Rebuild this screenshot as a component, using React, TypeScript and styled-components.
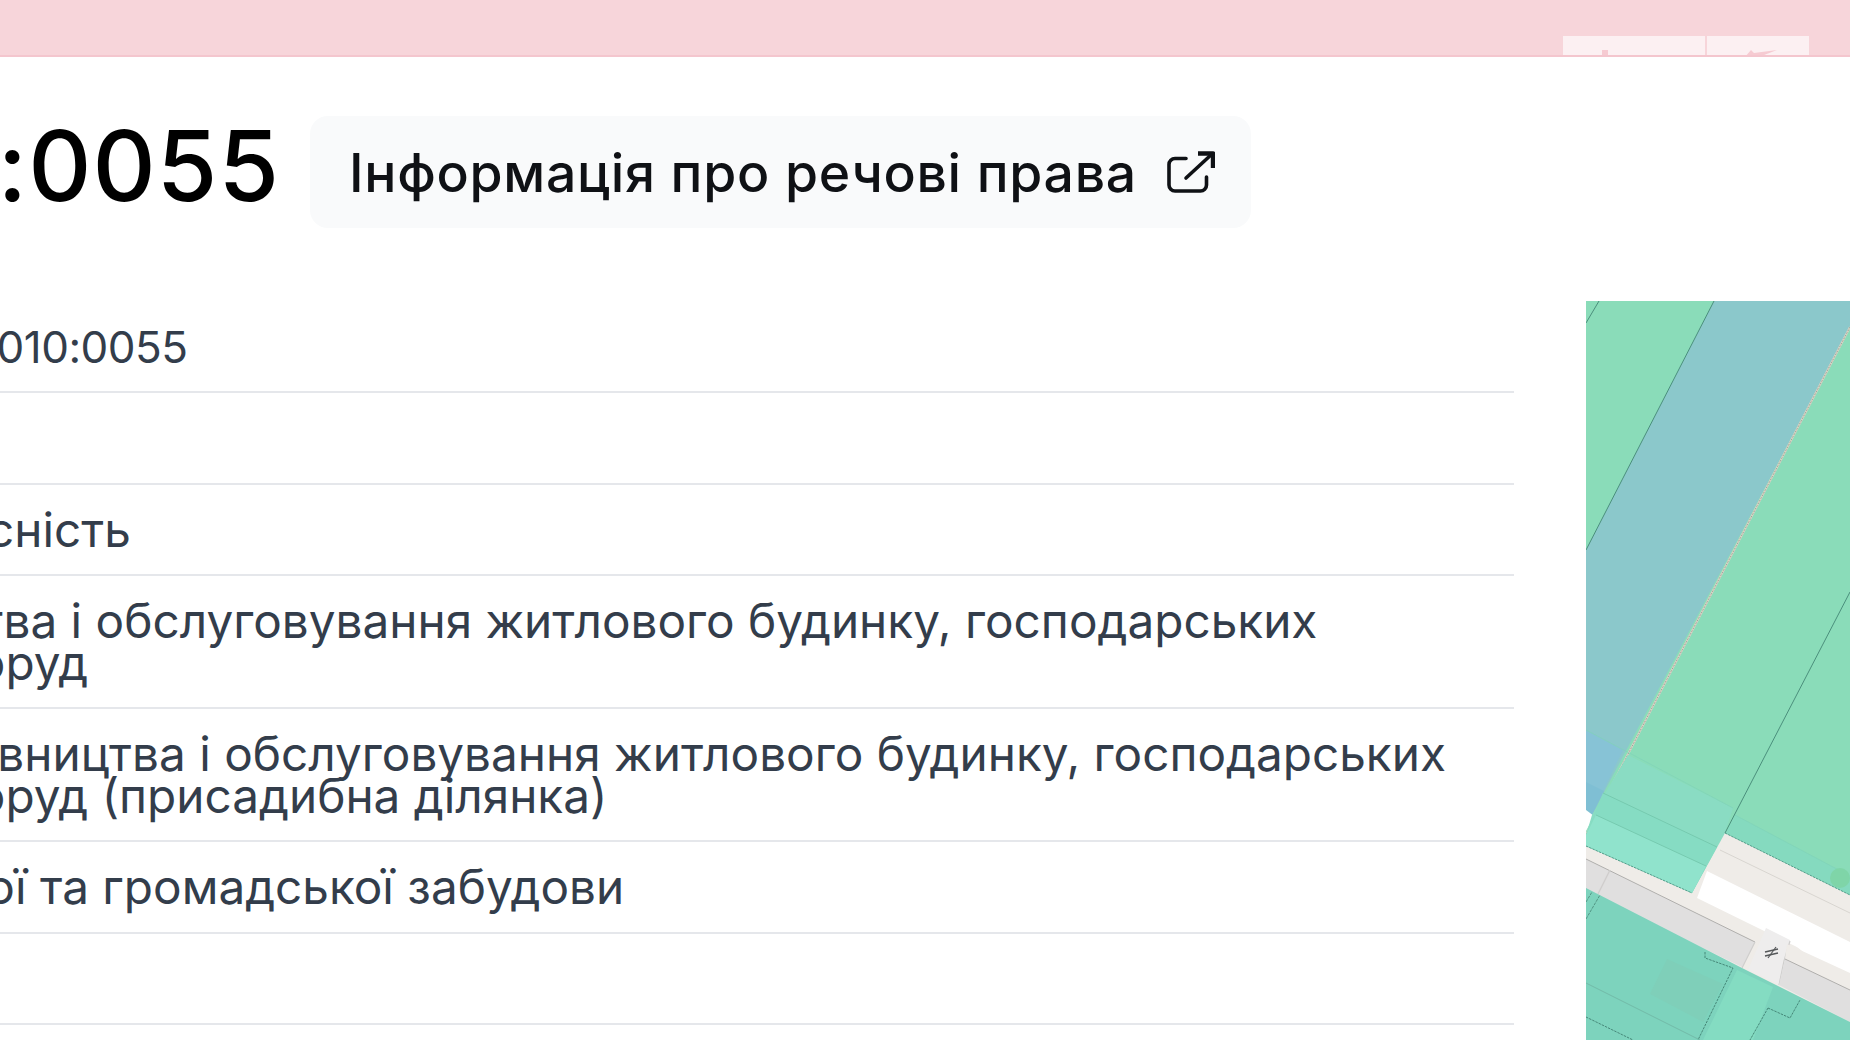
import React from 'react';
import styled, { createGlobalStyle } from 'styled-components';

const GlobalStyle = createGlobalStyle`
  html, body {
    margin: 0;
    height: 100%;
    overflow: hidden;
    background: #fff;
    font-family: Inter, "Liberation Sans", sans-serif;
  }
`;

const Screen = styled.div`
  width: 1850px;
  height: 1040px;
  overflow: hidden;
`;

const TopBar = styled.div`
  height: 57px;
  box-sizing: border-box;
  overflow: hidden;
  background: #f7d5da;
  border-bottom: 2px solid #f4c6ce;
  display: flex;
  justify-content: flex-end;
  align-items: flex-start;
  gap: 2px;
  padding: 36px 41px 0 0;
`;

const TopTab = styled.div<{ $width: number }>`
  width: ${(p) => p.$width}px;
  height: 21px;
  background: #fcf0f2;
  overflow: hidden;
  flex: none;
`;

const Page = styled.div`
  margin-left: -850px;
  width: 2700px;
`;

const Header = styled.header`
  display: flex;
  align-items: center;
  gap: 30px;
  margin-top: 59px;
  height: 112px;
`;

const TitleSlot = styled.div`
  width: 1130px;
  display: flex;
  justify-content: flex-end;
  flex: none;
`;

const Title = styled.h1`
  margin: 0;
  font-size: 98px;
  font-weight: 500;
  line-height: 100px;
  height: 112px;
  letter-spacing: 1px;
  color: #000;
  white-space: nowrap;
`;

const RightsButton = styled.a`
  display: flex;
  align-items: center;
  justify-content: space-between;
  width: 941px;
  height: 112px;
  box-sizing: border-box;
  padding: 0 36px 0 39px;
  background: #f9fafb;
  border-radius: 18px;
  color: #0f1115;
  font-size: 53.5px;
  font-weight: 500;
  letter-spacing: 0.7px;
  white-space: nowrap;
`;

const Body = styled.div`
  display: flex;
  align-items: flex-start;
  gap: 72px;
  margin-top: 73px;
`;

const Table = styled.div`
  width: 2364px;
  flex: none;
`;

const Row = styled.div`
  display: grid;
  grid-template-columns: 518px 1fr;
  padding: 24px 0 23.3px;
  border-bottom: 2px solid #e5e7eb;
  min-height: 42px;
  font-size: 47.7px;
  line-height: 42px;
  color: #333d4b;
`;

const Label = styled.div`
  font-weight: 500;
  white-space: nowrap;
`;

const Value = styled.div`
  white-space: nowrap;
`;

const NumberValue = styled(Value)`
  font-size: 44px;
  letter-spacing: -0.5px;
  padding-top: 1px;
`;

const CodedLine = styled.div`
  margin-left: -6px;
`;

const ContinuedLine = styled.div`
  padding-left: 12px;
`;

const MapPanel = styled.svg`
  display: block;
  flex: none;
  width: 264px;
  height: 739px;
`;

const LinkIcon = () => (
  <svg width={48} height={42} viewBox="0 0 48 42" fill="none" stroke="currentColor" strokeWidth={3.6} strokeLinecap="round" strokeLinejoin="round">
    <path d="M19 7.5H8a6 6 0 0 0-6 6V34a6 6 0 0 0 6 6h25.5a6 6 0 0 0 6-6V26" />
    <path d="M19 27L45 3" />
    <path d="M31 2.5H46V17" strokeWidth={4.4} strokeLinecap="butt" />
  </svg>
);

const ParcelMap = () => (
  <MapPanel viewBox="0 0 264 739" preserveAspectRatio="none">
    <defs>
      <filter id="soft" x="0" y="0" width="100%" height="100%">
        <feGaussianBlur stdDeviation="0.45" />
      </filter>
    </defs>
    <g filter="url(#soft)">
      <rect width="264" height="739" fill="#8adcb9" />
      {/* blue parcel */}
      <path d="M128 0H264V26L6 514L0 509V249Z" fill="#8bc8cb" />
      <path d="M0 429L37 449L6 514L0 509Z" fill="#87c3d6" />
      <path d="M0 481L18 490L6 514L0 509Z" fill="#7fbfd4" />
      <path d="M0 509L8 515L0 530Z" fill="#fff" />
      <path d="M13 0L0 22M128 0L0 249" stroke="#4b8f7c" strokeWidth="1" fill="none" />
      <path d="M264 26L0 534" stroke="#d9d2c4" strokeWidth="2" fill="none" />
      <path d="M264 26L0 534" stroke="#8a9a90" strokeWidth="0.8" strokeDasharray="1.5 1.5" fill="none" />

      {/* street */}
      <path d="M139 532L264 594V790H0V545Z" fill="#efece8" />
      <path d="M121 570L264 641V672L111 597Z" fill="#fff" />
      <path d="M111 597L179 628L204 640L264 669V690L204 640L179 628Z" fill="#fff" />
      <path d="M134 549L264 612" stroke="#d8d5d0" strokeWidth="1" fill="none" />
      <path d="M0 558L169 641L156 666L0 590Z" fill="#e0dfdf" />
      <path d="M0 558L169 641" stroke="#a9a8a6" strokeWidth="0.9" fill="none" />
      <path d="M24 569L12 593" stroke="#cfcecd" strokeWidth="1.4" fill="none" />
      <path d="M180 627L204 639L194 684L162 669Z" fill="#eeeded" />
      <path d="M169 641L156 667M204 640L198 660L193 684" stroke="#cfcecd" strokeWidth="1.2" fill="none" />
      <path d="M201 643L264 672V689L199 658Z" fill="#efece8" />
      <path d="M199 658L264 689V721L193 684Z" fill="#e0dfdf" />
      <path d="M199 658L264 689" stroke="#a9a8a6" strokeWidth="0.9" fill="none" />

      {/* lower parcels */}
      <path d="M0 587L156 667L264 721V739H0Z" fill="#7dd3bd" />
      <path d="M151 669L187 686L167 739H117Z" fill="#84dcc2" />
      <path d="M81 658L137 683L117 721L64 693Z" fill="#7fcfb9" />
      <path d="M0 601L6 591M0 618L14 594" stroke="#4d8f7e" strokeWidth="0.9" strokeDasharray="3 1" fill="none" />
      <path d="M119 651V657L147 667L112 739" stroke="#3f7f70" strokeWidth="0.9" strokeDasharray="2.5 1" fill="none" />
      <path d="M182 707L204 717L214 699M182 707L164 739" stroke="#3f7f70" strokeWidth="0.9" strokeDasharray="2.5 1" fill="none" />
      <path d="M0 716L47 739" stroke="#3f7f70" strokeWidth="0.9" strokeDasharray="2.5 1" fill="none" />
      <path d="M0 682L114 739" stroke="#6fb7a6" strokeWidth="0.9" fill="none" />

      {/* front of the green parcels */}
      <path d="M42 454L147 507L139 532L106 592L0 545V534L6 514Z" fill="#8adcc3" />
      <path d="M17 492L131 546L106 592L0 545V534Z" fill="#86dcc3" />
      <path d="M10 514L120 565L106 592L0 545V534Z" fill="#90e3cc" />
      <path d="M17 492L131 546M10 514L120 565" stroke="#74c7ad" strokeWidth="0.9" fill="none" />
      <path d="M0 545L106 592" stroke="#4f9583" strokeWidth="0.9" strokeDasharray="2.5 1" fill="none" />
      <path d="M149 514L264 575V594L139 532Z" fill="#85dabf" />
      <path d="M139 532L264 594" stroke="#4f9583" strokeWidth="0.9" strokeDasharray="2.5 1" fill="none" />
      <path d="M0 429L147 507M149 514L264 575" stroke="#7fd2b9" strokeWidth="0.7" fill="none" />
      <circle cx="254" cy="577" r="10" fill="#7fd5a8" />
      <path d="M264 291L139 532" stroke="#4b8f7c" strokeWidth="1" fill="none" />

      {/* crossing sign */}
      <path d="M179 651L192 648M179 655L192 652" stroke="#55585a" strokeWidth="1.5" fill="none" />
      <path d="M190 646L182 657" stroke="#55585a" strokeWidth="1.2" fill="none" />
    </g>
  </MapPanel>
);

export default function App() {
  return (
    <Screen>
      <GlobalStyle />
      <TopBar>
        <TopTab $width={142}>
          <svg width={142} height={21} viewBox="0 0 142 21">
            <rect x={39} y={14} width={6} height={7} fill="#f6cbd2" />
          </svg>
        </TopTab>
        <TopTab $width={102}>
          <svg width={102} height={21} viewBox="0 0 102 21">
            <path d="M38 21L44 14L47 17L70 14L52 21Z" fill="#f6cbd2" />
          </svg>
        </TopTab>
      </TopBar>
      <Page>
        <Header>
          <TitleSlot>
            <Title>3222484001:01:010:0055</Title>
          </TitleSlot>
          <RightsButton>
            Інформація про речові права
            <LinkIcon />
          </RightsButton>
        </Header>
        <Body>
          <Table>
            <Row>
              <Label>Кадастровий номер</Label>
              <NumberValue>3222484001:01:010:0055</NumberValue>
            </Row>
            <Row>
              <Label>Площа</Label>
              <Value />
            </Row>
            <Row>
              <Label>Форма власності</Label>
              <Value>Приватна власність</Value>
            </Row>
            <Row>
              <Label>Цільове призначення</Label>
              <Value>
                <div>Для будівництва і обслуговування житлового будинку, господарських</div>
                <ContinuedLine>будівель і споруд</ContinuedLine>
              </Value>
            </Row>
            <Row>
              <Label>Вид використання</Label>
              <Value>
                <CodedLine>02.01 Для будівництва і обслуговування житлового будинку, господарських</CodedLine>
                <ContinuedLine>будівель і споруд (присадибна ділянка)</ContinuedLine>
              </Value>
            </Row>
            <Row>
              <Label>Категорія земель</Label>
              <Value>Землі житлової та громадської забудови</Value>
            </Row>
            <Row>
              <Label>Оновлено</Label>
              <Value />
            </Row>
          </Table>
          <ParcelMap />
        </Body>
      </Page>
    </Screen>
  );
}
